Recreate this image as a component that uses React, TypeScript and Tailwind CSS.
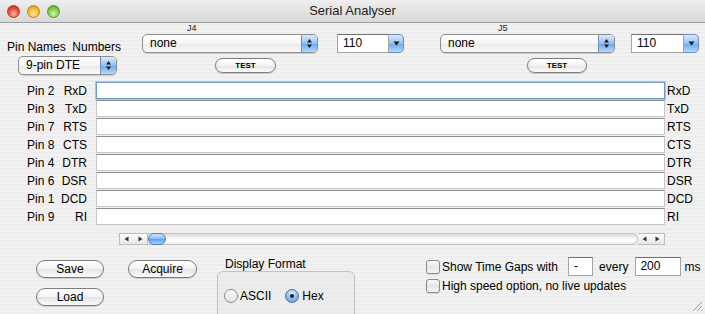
import React from "react";

const ROWS = [
  { pin: "Pin 2", sig: "RxD" },
  { pin: "Pin 3", sig: "TxD" },
  { pin: "Pin 7", sig: "RTS" },
  { pin: "Pin 8", sig: "CTS" },
  { pin: "Pin 4", sig: "DTR" },
  { pin: "Pin 6", sig: "DSR" },
  { pin: "Pin 1", sig: "DCD" },
  { pin: "Pin 9", sig: "RI" },
];

function Updown() {
  return (
    <svg width="7" height="11" viewBox="0 0 7 11">
      <path d="M3.5 1 L6 4.5 L1 4.5 Z" fill="#1a1a1a" />
      <path d="M3.5 10 L6 6.5 L1 6.5 Z" fill="#1a1a1a" />
    </svg>
  );
}

function Popup({ label, className }: { label: string; className: string }) {
  return (
    <div className={`flex h-[19px] rounded-[5px] border border-[#8e8e8e] bg-[linear-gradient(to_bottom,#ffffff,#f4f4f4_50%,#e9e9e9_51%,#fafafa)] shadow-[0_1px_1px_rgba(0,0,0,0.15)] ${className}`}>
      <span className="flex-1 pl-[7px] text-[12px] leading-[17px] text-black">{label}</span>
      <span className="flex w-[16px] items-center justify-center rounded-r-[4px] border-l border-[#6f8fb8] bg-[linear-gradient(to_bottom,#d9eafc,#93c2f2_50%,#67a7ec_51%,#b4dafc)]">
        <Updown />
      </span>
    </div>
  );
}

function Combo({ value, className }: { value: string; className: string }) {
  return (
    <div className={`flex h-[19px] ${className}`}>
      <div className="flex-1 border border-[#a5a5a5] border-t-[#707070] bg-white pl-[5px] text-[12px] leading-[16px] text-black">
        {value}
      </div>
      <div className="flex w-[15px] items-center justify-center rounded-r-[5px] border border-l-0 border-[#6f8fb8] bg-[linear-gradient(to_bottom,#d9eafc,#93c2f2_50%,#67a7ec_51%,#b4dafc)]">
        <svg width="7" height="5" viewBox="0 0 7 5">
          <path d="M0.5 0.5 L6.5 0.5 L3.5 4.5 Z" fill="#1a1a1a" />
        </svg>
      </div>
    </div>
  );
}

function Pill({ label, className }: { label: string; className: string }) {
  return (
    <div className={`flex items-center justify-center rounded-full border border-[#7b7b7b] bg-[linear-gradient(to_bottom,#ffffff,#f3f3f3_50%,#e4e4e4_51%,#fbfbfb)] shadow-[0_1px_1px_rgba(0,0,0,0.15)] text-black ${className}`}>
      {label}
    </div>
  );
}

function Check() {
  return (
    <span className="h-[14px] w-[14px] rounded-[3px] border border-[#8a8a8a] bg-[linear-gradient(to_bottom,#fafafa,#e6e6e6_50%,#f4f4f4)] shadow-[0_1px_1px_rgba(0,0,0,0.12)]" />
  );
}

function Radio({ on }: { on?: boolean }) {
  return on ? (
    <span className="flex h-[14px] w-[14px] items-center justify-center rounded-full border border-[#4a6fa5] bg-[radial-gradient(circle_at_50%_30%,#e2f0ff,#7fb4ee_60%,#4d8fdc)]">
      <span className="h-[4px] w-[4px] rounded-full bg-[#1c1c1c]" />
    </span>
  ) : (
    <span className="h-[14px] w-[14px] rounded-full border border-[#8a8a8a] bg-[linear-gradient(to_bottom,#fafafa,#e4e4e4)]" />
  );
}

function Arrow({ dir }: { dir: "l" | "r" }) {
  return (
    <svg width="5" height="6" viewBox="0 0 5 6">
      {dir === "l" ? <path d="M0.5 3 L4.5 0.5 L4.5 5.5 Z" fill="#333" /> : <path d="M4.5 3 L0.5 0.5 L0.5 5.5 Z" fill="#333" />}
    </svg>
  );
}

function Light({ color }: { color: "r" | "y" | "g" }) {
  const c =
    color === "r"
      ? "border-[#b0372c] bg-[radial-gradient(circle_at_50%_70%,#ffb8a6,#e84b3c_55%,#b92a1e)]"
      : color === "y"
      ? "border-[#b88a16] bg-[radial-gradient(circle_at_50%_70%,#ffe7a0,#f4b93a_55%,#c78a12)]"
      : "border-[#4e9a2c] bg-[radial-gradient(circle_at_50%_70%,#d4f7a8,#7fcb48_55%,#4c9a22)]";
  return <span className={`h-[13px] w-[13px] rounded-full border ${c}`} />;
}

export default function App() {
  return (
    <div className="flex h-[314px] w-[705px] flex-col overflow-hidden bg-[repeating-linear-gradient(to_bottom,#ededed_0px,#ededed_2px,#f2f2f2_2px,#f2f2f2_4px)] font-['Liberation_Sans',Arial,sans-serif] text-black">
      {/* title bar */}
      <div className="grid h-[23px] shrink-0 grid-cols-[1fr_auto_1fr] items-center border-b border-[#9c9c9c] bg-[linear-gradient(to_bottom,#efefef,#d8d8d8)]">
        <div className="flex gap-[7px] pl-[7px]">
          <Light color="r" />
          <Light color="y" />
          <Light color="g" />
        </div>
        <span className="text-[13px] text-[#222]">Serial Analyser</span>
        <div />
      </div>

      {/* top controls */}
      <div className="flex h-[55px] shrink-0">
        <div className="w-[142px] pl-[7px] pt-[16px]">
          <div className="whitespace-pre text-[12px] leading-[16px]">Pin Names  Numbers</div>
          <Popup label="9-pin DTE" className="ml-[11px] mt-[1px] w-[99px]" />
        </div>
        <div className="w-[298px]">
          <div className="h-[11px] pl-[45px] text-[9px] leading-[10px] text-[#222]">J4</div>
          <div className="flex">
            <Popup label="none" className="w-[176px]" />
            <Combo value="110" className="ml-[19px] w-[67px]" />
          </div>
          <Pill label="TEST" className="ml-[73px] mt-[5px] h-[15px] w-[61px] text-[8px] font-bold text-[#222]" />
        </div>
        <div className="flex-1">
          <div className="h-[11px] pl-[58px] text-[9px] leading-[10px] text-[#222]">J5</div>
          <div className="flex">
            <Popup label="none" className="w-[175px]" />
            <Combo value="110" className="ml-[16px] w-[68px]" />
          </div>
          <Pill label="TEST" className="ml-[87px] mt-[5px] h-[15px] w-[60px] text-[8px] font-bold text-[#222]" />
        </div>
      </div>

      {/* data rows */}
      <div className="mt-[4px] flex shrink-0 flex-col">
        {ROWS.map((r, i) => (
          <div key={r.pin} className="flex h-[18px] text-[12px] leading-[18px]">
            <div className="flex w-[96px] pl-[27px] pr-[9px]">
              <span className="w-[34px]">{r.pin}</span>
              <span className="flex-1 text-right">{r.sig}</span>
            </div>
            <div
              className={`mb-[1px] w-[569px] bg-white ${
                i === 0
                  ? "border border-[#6d98d0] shadow-[0_0_0_1px_#a9c8ef]"
                  : "border border-[#c6c6c6] border-t-[#8e8e8e]"
              }`}
            />
            <span className="pl-[2px]">{r.sig}</span>
          </div>
        ))}
      </div>

      {/* horizontal scrollbar */}
      <div className="ml-[119px] mt-[7px] flex h-[12px] w-[546px] shrink-0">
        <div className="flex w-[29px] items-center justify-around border border-[#bdbdbd] bg-[linear-gradient(to_bottom,#fdfdfd,#e6e6e6)]">
          <Arrow dir="l" />
          <Arrow dir="r" />
        </div>
        <div className="flex flex-1 rounded-r-full border border-l-0 border-[#c4c4c4] bg-[linear-gradient(to_bottom,#d9d9d9,#f6f6f6_40%,#ffffff_70%,#e8e8e8)]">
          <div className="-my-px h-[12px] w-[18px] rounded-full border border-[#4f7fbf] bg-[linear-gradient(to_bottom,#cfe5fd,#86bbf3_50%,#5b9de8_51%,#a9d4fb)]" />
        </div>
        <div className="flex w-[27px] items-center justify-around border border-l-0 border-[#bdbdbd] bg-[linear-gradient(to_bottom,#fdfdfd,#e6e6e6)]">
          <Arrow dir="l" />
          <Arrow dir="r" />
        </div>
      </div>

      {/* bottom controls */}
      <div className="flex min-h-0 flex-1 overflow-hidden">
        <div className="pl-[36px] pt-[15px]">
          <Pill label="Save" className="h-[18px] w-[68px] text-[12px]" />
          <Pill label="Load" className="mt-[10px] h-[18px] w-[68px] text-[12px]" />
        </div>
        <div className="ml-[24px] pt-[15px]">
          <Pill label="Acquire" className="h-[18px] w-[69px] text-[12px]" />
        </div>
        <div className="ml-[20px] flex flex-col pt-[13px]">
          <div className="pl-[8px] text-[12px] leading-[12px]">Display Format</div>
          <div className="mt-[1px] flex h-[50px] w-[138px] shrink-0 items-start rounded-t-[6px] border border-[#c2c2c2] bg-[#e6e6e6]/40 pl-[6px] pt-[17px] text-[12px] leading-[14px]">
            <span className="flex items-center gap-[2px]">
              <Radio />
              ASCII
            </span>
            <span className="ml-[14px] flex items-center gap-[3px]">
              <Radio on />
              Hex
            </span>
          </div>
        </div>
        <div className="ml-auto flex w-[279px] flex-col pt-[12px] text-[12px]">
          <div className="flex h-[19px] items-center">
            <Check />
            <span className="ml-[2px]">Show Time Gaps with</span>
            <div className="ml-[10px] h-[19px] w-[25px] border border-[#a5a5a5] border-t-[#707070] bg-white pl-[5px] leading-[16px]">-</div>
            <span className="ml-[6px]">every</span>
            <div className="ml-[7px] h-[19px] w-[46px] border border-[#a5a5a5] border-t-[#707070] bg-white pl-[4px] leading-[16px]">200</div>
            <span className="ml-[3px]">ms</span>
          </div>
          <div className="mt-[3px] flex h-[14px] items-center">
            <Check />
            <span className="ml-[2px]">High speed option, no live updates</span>
          </div>
          <div className="mt-auto flex justify-end pb-[2px] pr-[2px]">
            <svg width="11" height="11" viewBox="0 0 11 11">
              <path d="M10 1 L1 10 M10 5 L5 10 M10 9 L9 10" stroke="#9a9a9a" strokeWidth="1" />
            </svg>
          </div>
        </div>
      </div>
    </div>
  );
}
